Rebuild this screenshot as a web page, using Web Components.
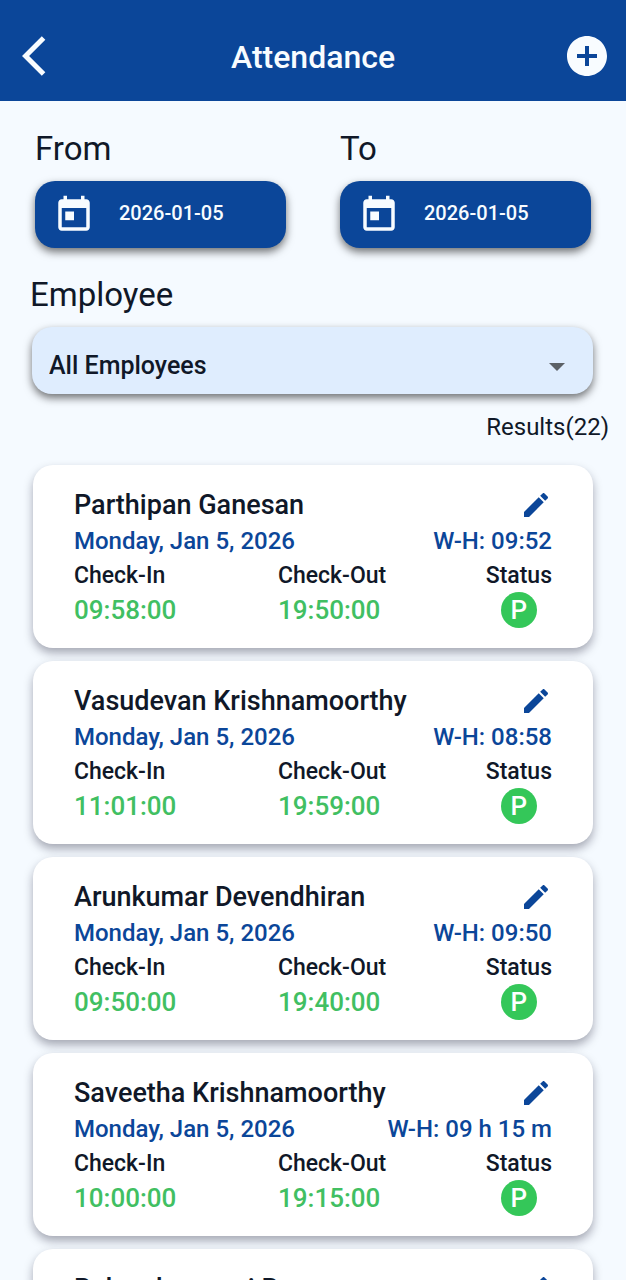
<!DOCTYPE html>
<html lang="en">
<head>
<meta charset="UTF-8">
<meta name="viewport" content="width=device-width, initial-scale=1">
<title>Attendance</title>
<style>
    body {
        margin: 0;
        background: #f5faff;
        color: #101828;
        font-family: Roboto, "Liberation Sans", sans-serif;
        --brand: #0b4699;
        --green: #34c759;
        --time: #41bf62;
    }
</style>
</head>
<body>
<attendance-page></attendance-page>

<script>
function makeTemplate(html) {
    const template = document.createElement('template');
    template.innerHTML = html;
    return template;
}

const headerTemplate = makeTemplate(`
    <style>
        :host {
            display: block;
            background: var(--brand);
            color: #f8fcff;
        }
        header {
            display: grid;
            grid-template-columns: 55px 1fr 55px;
            align-items: start;
            padding: 32px 15px 19px;
        }
        h1 {
            margin: 0;
            font-size: 32px;
            line-height: 50px;
            font-weight: 500;
            text-align: center;
        }
        button {
            display: block;
            justify-self: end;
            padding: 0;
            border: 0;
            background: none;
            color: inherit;
            cursor: pointer;
        }
        svg {
            display: block;
            width: 48px;
            height: 48px;
            fill: currentColor;
        }
    </style>
    <header>
        <button type="button" aria-label="Back">
            <svg viewBox="0 0 24 24"><path d="M11.67 3.87 9.9 2.1 0 12l9.9 9.9 1.77-1.77L3.54 12z"/></svg>
        </button>
        <h1><slot></slot></h1>
        <button type="button" aria-label="Add attendance">
            <svg viewBox="0 0 24 24"><path d="M12 2C6.48 2 2 6.48 2 12s4.48 10 10 10 10-4.48 10-10S17.52 2 12 2zm5 11h-4v4h-2v-4H7v-2h4V7h2v4h4v2z"/></svg>
        </button>
    </header>
`);

class AppHeader extends HTMLElement {
    constructor() {
        super();
        this.attachShadow({ mode: 'open' });
        this.shadowRoot.appendChild(headerTemplate.content.cloneNode(true));
    }
}

const dateTemplate = makeTemplate(`
    <style>
        :host {
            display: block;
        }
        label {
            display: block;
            font-size: 33px;
            line-height: 40px;
        }
        button {
            display: flex;
            align-items: center;
            gap: 24px;
            box-sizing: border-box;
            width: 100%;
            height: 67px;
            margin-top: 12px;
            padding: 0 18px;
            border: 0;
            border-radius: 20px;
            background: var(--brand);
            color: #f8fcff;
            box-shadow: 0 4px 8px rgba(0, 0, 0, 0.55);
            font: 500 20px/24px Roboto, sans-serif;
            cursor: pointer;
        }
        svg {
            width: 42px;
            height: 42px;
            fill: currentColor;
        }
        span {
            padding-bottom: 4px;
        }
    </style>
    <label for="date"></label>
    <button id="date" type="button">
        <svg viewBox="0 0 24 24"><path d="M19 3h-1V1h-2v2H8V1H6v2H5c-1.11 0-1.99.9-1.99 2L3 19c0 1.1.89 2 2 2h14c1.1 0 2-.9 2-2V5c0-1.1-.9-2-2-2zm0 16H5V8h14v11zM7 10h5v5H7z"/></svg>
        <span></span>
    </button>
`);

class DateField extends HTMLElement {
    constructor() {
        super();
        this.attachShadow({ mode: 'open' });
        this.shadowRoot.appendChild(dateTemplate.content.cloneNode(true));
    }

    connectedCallback() {
        this.shadowRoot.querySelector('label').textContent = this.getAttribute('label');
        this.shadowRoot.querySelector('span').textContent = this.getAttribute('value');
    }
}

const employeeTemplate = makeTemplate(`
    <style>
        :host {
            display: block;
        }
        label {
            display: block;
            font-size: 33px;
            line-height: 40px;
        }
        .box {
            display: grid;
            align-items: center;
            height: 67px;
            margin: 12px 0 0 2px;
            border-radius: 20px;
            background: #dfedfe;
            box-shadow: 0 4px 8px rgba(0, 0, 0, 0.55);
        }
        select, svg {
            grid-area: 1 / 1;
        }
        select {
            appearance: none;
            width: 100%;
            height: 100%;
            padding: 10px 60px 0 17px;
            border: 0;
            border-radius: inherit;
            background: none;
            color: inherit;
            font: 500 25px/32px Roboto, sans-serif;
        }
        svg {
            justify-self: end;
            width: 16px;
            height: 8px;
            margin: 12px 28px 0 0;
            fill: #5c6166;
            pointer-events: none;
        }
    </style>
    <label for="employee">Employee</label>
    <div class="box">
        <select id="employee"><option>All Employees</option></select>
        <svg viewBox="0 0 16 8"><path d="M0 0h16L8 8z"/></svg>
    </div>
`);

class EmployeeSelect extends HTMLElement {
    constructor() {
        super();
        this.attachShadow({ mode: 'open' });
        this.shadowRoot.appendChild(employeeTemplate.content.cloneNode(true));
    }
}

const cardTemplate = makeTemplate(`
    <style>
        :host {
            display: block;
            padding: 22px 41px 20px;
            border-radius: 20px;
            background: #fff;
            box-shadow: 0 5px 10px rgba(16, 16, 40, 0.35);
            font-weight: 500;
        }
        .row {
            display: flex;
            justify-content: space-between;
            align-items: center;
        }
        h2 {
            margin: 0;
            font-size: 27px;
            line-height: 36px;
            font-weight: 500;
        }
        button {
            display: block;
            padding: 0;
            border: 0;
            background: none;
            color: var(--brand);
            cursor: pointer;
        }
        svg {
            display: block;
            width: 32px;
            height: 32px;
            fill: currentColor;
        }
        .info {
            color: var(--brand);
            font-size: 24px;
            line-height: 36px;
        }
        .times {
            display: grid;
            grid-template-columns: 204px 1fr auto;
        }
        .label {
            font-size: 23px;
            line-height: 33px;
        }
        .time {
            color: var(--time);
            font-size: 26px;
            line-height: 36px;
        }
        .badge {
            justify-self: center;
            width: 36px;
            border-radius: 50%;
            background: var(--green);
            color: #fff;
            font-size: 26px;
            line-height: 36px;
            text-align: center;
        }
    </style>
    <div class="row">
        <h2></h2>
        <button type="button" aria-label="Edit">
            <svg viewBox="0 0 24 24"><path d="M3 17.25V21h3.75L17.81 9.94l-3.75-3.75L3 17.25zM20.71 7.04c.39-.39.39-1.02 0-1.41l-2.34-2.34c-.39-.39-1.02-.39-1.41 0l-1.83 1.83 3.75 3.75 1.83-1.83z"/></svg>
        </button>
    </div>
    <div class="row info">
        <span class="date"></span>
        <span class="hours"></span>
    </div>
    <div class="times">
        <span class="label">Check-In</span>
        <span class="label">Check-Out</span>
        <span class="label">Status</span>
        <span class="time in"></span>
        <span class="time out"></span>
        <span class="badge">P</span>
    </div>
`);

class AttendanceCard extends HTMLElement {
    constructor() {
        super();
        this.attachShadow({ mode: 'open' });
        this.shadowRoot.appendChild(cardTemplate.content.cloneNode(true));
    }

    /**
     * Fills the card from one attendance record.
     * @param {Object} record
     */
    setRecord(record) {
        const root = this.shadowRoot;
        root.querySelector('h2').textContent = record.name;
        root.querySelector('.date').textContent = record.date;
        root.querySelector('.hours').textContent = `W-H: ${record.hours}`;
        root.querySelector('.in').textContent = record.checkIn;
        root.querySelector('.out').textContent = record.checkOut;
    }
}

const pageTemplate = makeTemplate(`
    <style>
        :host {
            display: flex;
            flex-direction: column;
            height: 100vh;
        }
        main {
            flex: 1;
            min-height: 0;
            overflow-y: auto;
            scrollbar-width: none;
        }
        .dates {
            display: grid;
            grid-template-columns: 1fr 1fr;
            gap: 54px;
            padding: 28px 35px 0;
        }
        employee-select {
            margin: 27px 33px 0 30px;
        }
        .results {
            margin: 0;
            padding: 17px 17px 0;
            font-size: 24px;
            line-height: 32px;
            text-align: right;
        }
        .list {
            display: grid;
            gap: 13px;
            padding: 22px 33px;
        }
    </style>
    <app-header>Attendance</app-header>
    <main>
        <div class="dates">
            <date-field label="From" value="2026-01-05"></date-field>
            <date-field label="To" value="2026-01-05"></date-field>
        </div>
        <employee-select></employee-select>
        <p class="results">Results(22)</p>
        <div class="list"></div>
    </main>
`);

const records = [
    { name: 'Parthipan Ganesan', hours: '09:52', checkIn: '09:58:00', checkOut: '19:50:00' },
    { name: 'Vasudevan Krishnamoorthy', hours: '08:58', checkIn: '11:01:00', checkOut: '19:59:00' },
    { name: 'Arunkumar Devendhiran', hours: '09:50', checkIn: '09:50:00', checkOut: '19:40:00' },
    { name: 'Saveetha Krishnamoorthy', hours: '09 h 15 m', checkIn: '10:00:00', checkOut: '19:15:00' },
    { name: 'Balasubramani R', hours: '', checkIn: '', checkOut: '' }
];

class AttendancePage extends HTMLElement {
    constructor() {
        super();
        this.attachShadow({ mode: 'open' });
        this.shadowRoot.appendChild(pageTemplate.content.cloneNode(true));
        this._renderRecords();
    }

    _renderRecords() {
        const list = this.shadowRoot.querySelector('.list');
        for (const record of records) {
            const card = document.createElement('attendance-card');
            card.setRecord({ date: 'Monday, Jan 5, 2026', ...record });
            list.appendChild(card);
        }
    }
}

customElements.define('app-header', AppHeader);
customElements.define('date-field', DateField);
customElements.define('employee-select', EmployeeSelect);
customElements.define('attendance-card', AttendanceCard);
customElements.define('attendance-page', AttendancePage);
</script>
</body>
</html>
